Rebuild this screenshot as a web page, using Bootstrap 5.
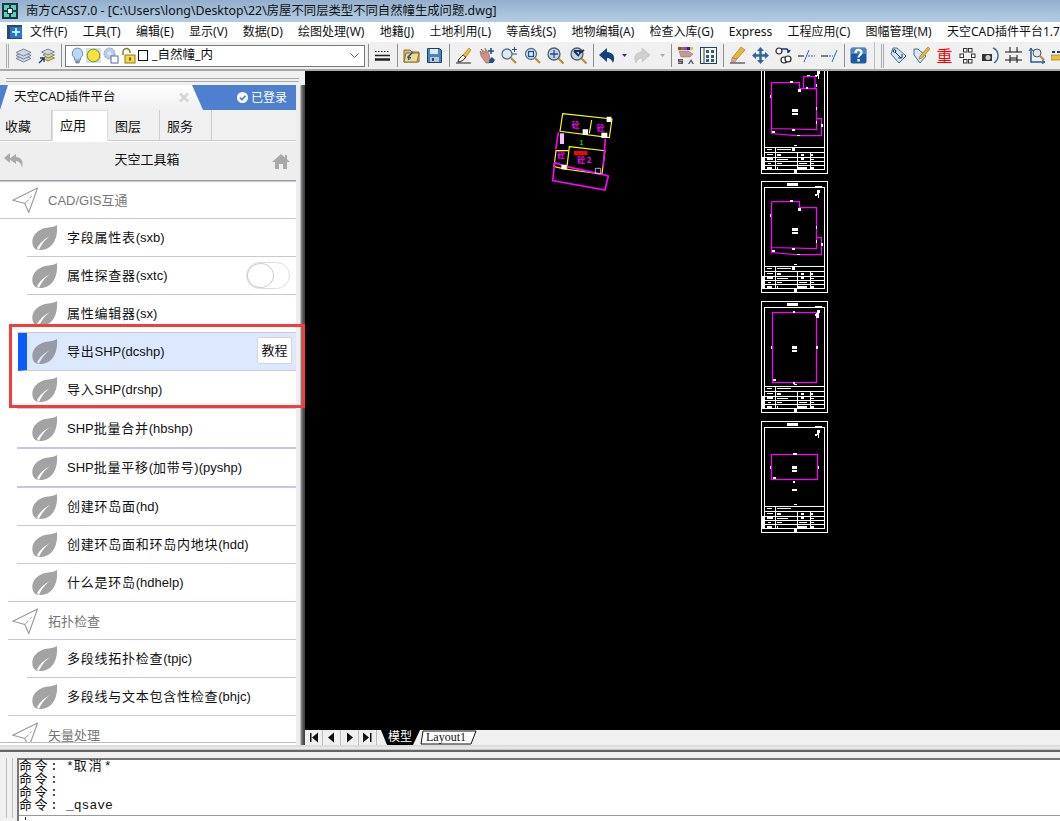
<!DOCTYPE html>
<html lang="zh-CN">
<head>
  <meta charset="UTF-8">
  <meta name="viewport" content="width=device-width, initial-scale=1.0">
  <title>南方CASS7.0</title>
  <link href="https://cdn.jsdelivr.net/npm/bootstrap@5.3.0/dist/css/bootstrap.min.css" rel="stylesheet">
  <style>
    html, body { height: 821px; overflow: hidden; }
    body { font-family: "Liberation Sans", "Noto Sans CJK SC", sans-serif; font-size: 13px; color: #111; background: #f0f0f0; position: relative; }
    svg { display: block; flex: none; }

    .win-title { height: 22px; padding-left: 2px; gap: 8px; background: linear-gradient(#94afcd, #b3cde5); font-family: "Noto Sans", "Noto Sans CJK SC", sans-serif; font-size: 12.35px; white-space: nowrap; }
    .menu-bar { height: 20px; background: #fff; padding-left: 7px; font-family: "Noto Sans", "Noto Sans CJK SC", sans-serif; font-size: 12px; white-space: nowrap; overflow: hidden; }
    .menu-bar .app-ico { margin-right: 7px; }
    .menu-bar span { margin-right: 15.3px; flex: none; }

    .tool-bar { height: 29px; background: #f0f0f0; border-bottom: 2px solid #a9a9a9; padding: 0 0 0 6px; gap: 6px; overflow: hidden; }
    .tool-bar > * { flex: none; }
    .grip { width: 3px; height: 24px; border-left: 1px solid #aaa; border-right: 1px solid #aaa; }
    .tb-sep { width: 1px; height: 23px; background: #8e8e8e; margin-right: -1px; }
    .combo { width: 300px; height: 22px; margin-left: -2px; margin-right: -3px; background: #fff; border: 1px solid #7a7a7a; padding-left: 5px; gap: 2px; }
    .combo-text { margin-left: 2px; font-family: "Noto Sans", "Noto Sans CJK SC", sans-serif; font-size: 12.5px; }
    .combo-arrow { margin-left: auto; margin-right: 5px; }
    .tb-end { width: 1px; height: 29px; background: #bbb; margin-left: 1px; }
    .tb-drop { width: 5px; }
    .red-char { width: 17px; height: 17px; color: #f00; font-size: 16px; line-height: 17px; text-align: center; font-family: "Noto Sans CJK SC", sans-serif; }

    .work { height: 674px; }
    .side { width: 305px; flex: none; position: relative; background: linear-gradient(90deg, #fff 296px, #eee 296px, #eee 300px, #8a8a8a 301px, #444 304px); overflow: hidden; }
    .side-in { width: 296px; height: 658px; overflow: hidden; background: #fff; border-bottom: 1px solid #bbb; }
    .side-top { height: 14px; background: #f0f0f0; padding: 7px 6px 0; }
    .side-top div { height: 4px; border-top: 1px solid #aaa; border-bottom: 1px solid #aaa; }

    .plug-head { height: 25px; background: #4f7fcf; color: #fff; }
    .plug-tab { width: 203px; height: 25px; padding: 0 13px 0 14px; background: linear-gradient(#fff, #f0f0f0); color: #111; font-size: 12.5px; clip-path: polygon(0 100%, 8px 0, 192px 0, 203px 100%); }
    .plug-user { margin-left: auto; margin-right: 9px; font-size: 12px; gap: 3px; }

    .tab-row { height: 31px; background: #f0f0f0; border-bottom: 1px solid #ccc; }
    .tab-row div { height: 30px; font-size: 13px; line-height: 34px; border-right: 1px solid #ccc; width: 52px; padding-left: 7px; }
    .tab-row .tab-first { padding-left: 5px; }
    .tab-row .tab-on { width: 56px; height: 31px; background: #fff; line-height: 29px; border: 1px solid #ddd; border-bottom: 0; }

    .nav-row { height: 39px; margin-top: 1px; background: #eee; border-bottom: 1px solid #9a9aae; box-shadow: 0 1px 1px #ccc; padding: 0 6px 0 4px; }
    .nav-name { flex: 1; text-align: center; margin-left: -2px; padding-bottom: 2px; }

    .grp-row { height: 38px; border-bottom: 1px solid #c8c6e6; padding-left: 12px; color: #777; }
    .grp-row svg { margin-right: 10px; }
    .grp-row span { padding-top: 2px; }
    .grp-last { margin-left: 8px; padding-left: 4px; }
    .tool-row { height: 38px; margin-left: 27px; padding-left: 4px; border-bottom: 1px solid #c8c6e6; position: relative; }
    .tool-row svg { margin-right: 9px; }
    .tool-row > span { padding-top: 1px; }
    .tool-wide { margin-left: 17px; padding-left: 14px; }
    .tool-wider { margin-left: 8px; padding-left: 23px; }
    .tool-thick { border-bottom-width: 2px; height: 39px; }
    .tool-tall { height: 40px; }
    .tool-on { margin-left: 18px; padding-left: 4px; border-left: 9px solid #0a5cff; background: #dce8fb; }
    .zh { letter-spacing: 0.75px; }
    .mini-switch { margin-left: auto; margin-right: 6px; width: 44px; height: 27px; border: 1px solid #ddd; border-radius: 14px; background: #fff; }
    .mini-switch div { width: 27px; height: 25px; border: 1px solid #ccc; border-radius: 50%; background: #fff; }
    .help-btn { margin: 0 4px 2px auto; width: 35px; height: 27px; padding: 0; font-size: 13px; line-height: 25px; color: #111; background: #fff; border: 1px solid #d5d5d5; border-radius: 2px; }

    .red-box { position: absolute; left: 9px; top: 253px; width: 296px; height: 84px; border: 3px solid #f33d3d; pointer-events: none; }

    .canvas-col { flex: 1; min-width: 0; }
    .cad-view { height: 659px; background: #000; }
    .sheet-tabs { height: 15px; background: #f0f0f0; }
    .nav-btn { width: 18px; height: 15px; border-right: 1px solid #bbb; }
    .sheet-on { position: relative; width: 39px; height: 15px; margin-left: 4px; padding-left: 7px; color: #fff; font-size: 12px; line-height: 15px; white-space: nowrap; }
    .sheet-on::before { content: ""; position: absolute; inset: 0; background: #000; clip-path: polygon(0 0, 39px 0, 32px 100%, 6px 100%); }
    .sheet-on span { position: relative; }
    .split-bar { height: 7px; background: linear-gradient(#d8d8d8, #ededed 60%, #666 75%, #666); }

    .cmd { height: 69px; padding: 6px 0 0 6px; background: #f0f0f0; }
    .cmd-grip { width: 7px; height: 60px; border-left: 1px solid #bbb; border-right: 1px solid #bbb; margin-right: 4px; }
    .cmd-box { flex: 1; background: #fff; border: 1px solid #777; border-width: 2px 0 0 2px; font-family: "Liberation Mono", "Noto Sans CJK SC", monospace; font-size: 13px; }
    .cmd-lines { height: 56px; border-bottom: 1px solid #999; }
    .cmd-lines div { height: 13px; line-height: 13px; white-space: pre; }
    .cmd-who { display: inline-block; width: 47px; letter-spacing: 2.5px; }
    .cmd-zh { letter-spacing: 2px; }
    .cmd-tick { width: 1px; height: 3px; background: #222; margin: 1px 0 0 6px; }
  </style>
</head>
<body>
  <!-- title bar -->
  <div class="win-title d-flex align-items-center">
    <svg width="16" height="16" viewBox="0 0 16 16"><rect width="16" height="16" fill="#1c3a3a"/><path d="M2 2h5v3H5v2H2zM9 2h5v5h-3V5H9zM2 9h3v2h2v3H2zM11 9h3v5H9v-3h2z" fill="#5ad0c0"/><path d="M6 6h4v4H6z" fill="#e8f4f0"/></svg>
    <span>南方CASS7.0 - [C:\Users\long\Desktop\22\房屋不同层类型不同自然幢生成问题.dwg]</span>
  </div>

  <!-- menu -->
  <div class="menu-bar d-flex align-items-center">
    <svg class="app-ico" width="16" height="15" viewBox="0 0 16 15"><rect x="0" y="0" width="15" height="14" fill="#33475f"/><rect x="3" y="2" width="12" height="11" fill="#1e78d8"/><path d="M5 7h8M9 3v8" stroke="#fff" stroke-width="1.500"/></svg>
    <span>文件(F)</span><span>工具(T)</span><span>编辑(E)</span><span>显示(V)</span><span>数据(D)</span><span>绘图处理(W)</span><span>地籍(J)</span><span>土地利用(L)</span><span>等高线(S)</span><span>地物编辑(A)</span><span>检查入库(G)</span><span>Express</span><span>工程应用(C)</span><span>图幅管理(M)</span><span>天空CAD插件平台1.7</span>
  </div>

  <!-- toolbar -->
  <div class="tool-bar d-flex align-items-center">
    <div class="grip"></div>
    <svg width="17" height="17" viewBox="0 0 17 17"><g fill="#ccd8e6" stroke="#76869a"><path d="M8.500 8 16 11.500 8.500 15 1 11.500z"/><path d="M8.500 5 16 8.500 8.500 12 1 8.500z"/><path d="M8.500 2 16 5.500 8.500 9 1 5.500z"/></g></svg>
    <svg width="17" height="17" viewBox="0 0 17 17"><g stroke="#76869a"><path d="M10 8 16.500 11 10 14 5 11.500z" fill="#f1c93c"/><path d="M10 5 16.500 8 10 11 5 8z" fill="#e8d27a"/><path d="M10 2 16.500 5 10 8 3.500 5z" fill="#ccd8e6"/></g><path d="M1 16 6 11M2 11h4v4" stroke="#123a7a" stroke-width="1.300" fill="none"/></svg>
    <div class="tb-sep"></div>
    <div class="combo d-flex align-items-center">
      <svg width="13" height="17" viewBox="0 0 13 17"><path d="M6.500 1a5.500 5.500 0 0 1 3 10v2h-6v-2a5.500 5.500 0 0 1 3-10z" fill="#bcd8f2" stroke="#6b8fb5"/><path d="M4 13.500h5v1.500l-1 1.500H5L4 15z" fill="#7d8fa5"/></svg>
      <svg width="15" height="17" viewBox="0 0 15 17"><rect x="0" y="1" width="15" height="15" fill="#cfe0f2"/><circle cx="7.500" cy="8.500" r="6.300" fill="#f7e33a" stroke="#7a8a30"/></svg>
      <svg width="16" height="17" viewBox="0 0 16 17"><circle cx="6.500" cy="6.500" r="5.500" fill="#b8cde8" stroke="#7f9cc4" stroke-dasharray="2 1"/><circle cx="6.500" cy="6.500" r="2" fill="#dfe9f6"/><rect x="8" y="9" width="7" height="7" fill="#fff" stroke="#4d6f9f"/></svg>
      <svg width="15" height="17" viewBox="0 0 15 17"><path d="M2 8V5a3.500 3.500 0 0 1 7 0v1" fill="none" stroke="#8a7a20" stroke-width="1.500"/><rect x="4" y="8" width="10" height="8" fill="#f5dc3c" stroke="#8a7a20"/><rect x="8" y="10.500" width="2" height="3" fill="#6a5a10"/></svg>
      <svg width="10" height="11" viewBox="0 0 10 11"><rect x=".5" y=".5" width="9" height="10" fill="#fff" stroke="#111"/></svg>
      <span class="combo-text">_自然幢_内</span>
      <svg class="combo-arrow" width="9" height="6" viewBox="0 0 9 6"><path d="M.5.500 4.500 4.500 8.500.5" fill="none" stroke="#555"/></svg>
    </div>
    <div class="tb-sep"></div>
    <svg width="17" height="17" viewBox="0 0 17 17"><path d="M1 4.500h1.500M4 4.500h1.500M7 4.500h1.500M10 4.500h1.500M13 4.500h1.500" stroke="#222"/><path d="M1 8.500h15" stroke="#222" stroke-width="1.500"/><path d="M1 12.500h15" stroke="#222" stroke-width="2.500"/></svg>
    <div class="tb-sep"></div>
    <svg width="17" height="17" viewBox="0 0 17 17"><path d="M1 3h6l2 2h7v10H1z" fill="#d8bd74" stroke="#8a6f30"/><path d="M3 6h13l-2 9H1z" fill="#efd98e" stroke="#8a6f30"/><path d="M10 5 5 10l1 3M5 10l3 1" stroke="#1c5a9a" stroke-width="1.500" fill="none"/></svg>
    <svg width="17" height="17" viewBox="0 0 17 17"><path d="M1.500 1.500h12l2 2v12h-14z" fill="#4b83c0" stroke="#1f3f70"/><rect x="4" y="2" width="8" height="5" fill="#dfe9f5"/><rect x="4" y="10" width="9" height="5" fill="#b8c8da"/><rect x="6" y="11" width="2" height="3" fill="#26456f"/></svg>
    <div class="tb-sep"></div>
    <svg width="17" height="17" viewBox="0 0 17 17"><path d="M1 16h15" stroke="#222"/><path d="M3 15C3 12 6 10 8 8l3 2c-2 3-5 5-8 5z" fill="none" stroke="#222"/><path d="m8 8 6-7 2 2-5 7z" fill="#f0b93a" stroke="#a06a10" stroke-width=".6"/></svg>
    <svg width="17" height="17" viewBox="0 0 17 17"><path d="M2 4l4 3-3-5 5 4-1-5 4 6 1 5-1 4H8L3 9z" fill="#cf9186" stroke="#96685f" stroke-width=".7"/><path d="M11.500 12.500 14 10l3 3-2 3h-4z" fill="#16509a"/><path d="M13 1v6M10 4h6" stroke="#16509a" stroke-width="1.600"/></svg>
    <svg width="17" height="17" viewBox="0 0 17 17"><circle cx="6" cy="7" r="5" fill="#dbeaf7" stroke="#5f6f80" stroke-width="1.300"/><path d="m10 11 5 5" stroke="#c28a30" stroke-width="2.200"/><path d="M13.500 0v5M11 2.500h5M11 7h5" stroke="#16509a"/></svg>
    <svg width="17" height="17" viewBox="0 0 17 17"><circle cx="7" cy="7" r="5.500" fill="#dbeaf7" stroke="#5f6f80" stroke-width="1.300"/><path d="m11 11 5 5" stroke="#c28a30" stroke-width="2.200"/><rect x="4.500" y="4.500" width="5" height="5" fill="none" stroke="#16509a" stroke-width="1.300"/></svg>
    <svg width="17" height="17" viewBox="0 0 17 17"><circle cx="7" cy="7" r="6" fill="#c6d4e2" stroke="#4f5f70" stroke-width="1.300"/><path d="m11.500 11.500 5 5" stroke="#c28a30" stroke-width="2.200"/><path d="M7 3v8M3 7h8" stroke="#16509a" stroke-width="1.300"/></svg>
    <svg width="17" height="17" viewBox="0 0 17 17"><circle cx="7" cy="7" r="6" fill="#c6d4e2" stroke="#4f5f70" stroke-width="1.300"/><path d="m11.500 11.500 5 5" stroke="#c28a30" stroke-width="2.200"/><path d="M4 4h6v2l4-3M4 4l5 5" stroke="#16345f" stroke-width="2" fill="none"/></svg>
    <div class="tb-sep"></div>
    <svg width="17" height="17" viewBox="0 0 17 17"><path d="M0 8 8 1v4c6 0 9 5 6 11-1-3-3-5-6-5v4z" fill="#14417e"/></svg>
    <svg class="tb-drop" width="5" height="17" viewBox="0 0 5 17"><path d="M0 7h5L2.500 10z" fill="#14417e"/></svg>
    <svg width="17" height="17" viewBox="0 0 17 17"><path d="M17 8 9 1v4C3 5 0 10 3 16c1-3 3-5 6-5v4z" fill="#cfcfcf" stroke="#b5b5b5" stroke-width=".5"/></svg>
    <svg class="tb-drop ms-1" width="5" height="17" viewBox="0 0 5 17"><path d="M0 7h5L2.500 10z" fill="#aaa"/></svg>
    <div class="tb-sep"></div>
    <svg width="17" height="17" viewBox="0 0 17 17"><path d="M1 0h3v3H1z" fill="#d22"/><path d="M4 0h3v3H4z" fill="#2a2"/><path d="M7 0h3v3H7z" fill="#c2c"/><path d="M10 0h3v3h-3z" fill="#22c"/><path d="M13 0h3v3h-3z" fill="#cc2"/><path d="M2 4h9l5 3-3 3H4z" fill="#c79a90" stroke="#8a6a60" stroke-width=".5"/><path d="M1 12h5v1.500H2.500v.5H6V17H1v-1.500h3.500V15H1zM11 17l3-5 3 5h-1.500L14 14.500 12.500 17z" fill="#556"/></svg>
    <svg width="17" height="17" viewBox="0 0 17 17"><rect x=".5" y=".5" width="16" height="16" fill="#fdf8d8" stroke="#1f3f70"/><path d="M4 1v15" stroke="#1f3f70"/><path d="M6 3h3v3H6zM11 3h3v3h-3zM6 8h3v3H6zM11 8h3v3h-3zM6 12h3v3H6zM11 12h3v3h-3z" fill="#2a5c96"/></svg>
    <div class="tb-sep"></div>
    <svg width="17" height="17" viewBox="0 0 17 17"><path d="M1 16h15" stroke="#222"/><path d="m12 0 4 3-8 9-5-1z" fill="#e8b53a" stroke="#96701a" stroke-width=".6"/><path d="m3 11 5 1-2 3H2z" fill="#e6a4a0" stroke="#a06a60" stroke-width=".5"/></svg>
    <svg width="17" height="17" viewBox="0 0 17 17"><path d="M8.500 0 12 4h-2.300v3.300H13V5l4 3.500L13 12V9.700H9.700V13H12l-3.500 4L5 13h2.300V9.700H4V12L0 8.500 4 5v2.300h3.300V4H5z" fill="#2a64a8"/></svg>
    <svg width="17" height="17" viewBox="0 0 17 17"><g fill="#fff" stroke="#222" stroke-width="1.200"><circle cx="4" cy="4" r="3"/><circle cx="9" cy="13" r="3"/><circle cx="13" cy="12" r="3"/></g><path d="M6 2h6l2 3M14 5l-2 0M14 5l1-2" fill="none" stroke="#123a7a" stroke-width="1.400"/></svg>
    <svg width="17" height="17" viewBox="0 0 17 17"><path d="M0 9h6" stroke="#111"/><path d="M6 15 11 3" stroke="#1a6ad0"/><path d="M10 9h7" stroke="#1a6ad0" stroke-dasharray="2 1"/></svg>
    <svg width="17" height="17" viewBox="0 0 17 17"><path d="M0 9h7" stroke="#111"/><path d="M8 9h4" stroke="#1a6ad0" stroke-dasharray="2 1"/><path d="M11 15 16 3" stroke="#1a6ad0"/></svg>
    <div class="tb-sep"></div>
    <svg width="17" height="17" viewBox="0 0 17 17"><rect width="16" height="16" x=".5" y=".5" rx="2" fill="#1f5a9f"/><rect x="1" y="1" width="15" height="6" fill="#4d86c4"/><path d="M5.500 6c0-4 6-4 6-.5 0 2.500-3 2.500-3 5" fill="none" stroke="#fff" stroke-width="2.200"/><rect x="7.400" y="12" width="2.300" height="2.500" fill="#fff"/></svg>
    <div class="tb-end"></div>
    <div class="grip"></div>
    <svg width="17" height="17" viewBox="0 0 17 17"><path d="M3 1h4l9 8-7 7-8-9z" fill="#d6e6f5" stroke="#3f6f9f"/><circle cx="4.500" cy="4" r="1.300" fill="#fff" stroke="#223"/><path d="M5 5 11 11M8 11h4V7" stroke="#123a7a" fill="none"/></svg>
    <svg width="17" height="17" viewBox="0 0 17 17"><path d="M1 2h4l8 7-6 7-6-8z" fill="#d6e6f5" stroke="#3f6f9f"/><path d="M15 0l2 2-8 9-3 1 1-3z" fill="#e8b53a" stroke="#96701a" stroke-width=".6"/></svg>
    <span class="red-char">重</span>
    <svg width="17" height="17" viewBox="0 0 17 17"><g fill="#fff" stroke="#333"><rect x="4.500" y="1.500" width="3.500" height="3.500"/><rect x="9.500" y="1.500" width="3.500" height="3.500"/><rect x="1" y="7" width="3.500" height="3.500"/><rect x="12.500" y="7" width="3.500" height="3.500"/><rect x="4.500" y="12.500" width="3.500" height="3.500"/><rect x="9.500" y="12.500" width="3.500" height="3.500"/></g></svg>
    <svg width="17" height="17" viewBox="0 0 17 17"><path d="M0 7h10v7H0z" fill="#333"/><circle cx="6" cy="10.500" r="2.500" fill="#ccc"/><path d="M11 1c6 2 7 11 1 15" fill="none" stroke="#3f6f9f" stroke-width="1.500"/></svg>
    <svg width="17" height="17" viewBox="0 0 17 17"><path d="M0 5h17M0 13h17" stroke="#111"/><path d="M5 0v5M12 0v5M5 8v8M12 8v8M5 11h7" stroke="#111"/></svg>
    <svg width="17" height="17" viewBox="0 0 17 17"><path d="M3 1v14h14" fill="none" stroke="#1a5aa8" stroke-width="1.500"/><path d="m1 4 2-3 2 3M14 13l3 2-3 2" fill="none" stroke="#1a5aa8"/><circle cx="9" cy="6" r="4" fill="#dbeaf7" stroke="#555"/><path d="m12 9 4 4" stroke="#c28a30" stroke-width="2"/></svg>
    <svg width="17" height="17" viewBox="0 0 17 17"><path d="M0 8h17v5H0z" fill="#e8c03a" stroke="#8a6f20" stroke-width=".6"/><path d="M1 4h3v2H1zM6 4h3v2H6zM11 4h3v2h-3z" fill="#123a7a"/></svg>
  </div>

  <div class="work d-flex">
    <!-- left panel -->
    <div class="side">
      <div class="side-top"><div></div></div>
      <div class="side-in">
        <div class="plug-head d-flex align-items-center">
          <div class="plug-tab d-flex align-items-center justify-content-between">
            <span>天空CAD插件平台</span>
            <svg width="12" height="11" viewBox="0 0 12 11"><path d="M2 1.500 10 9.500M10 1.500 2 9.500" stroke="#d6d6d6" stroke-width="2.500"/></svg>
          </div>
          <div class="plug-user d-flex align-items-center">
            <svg width="11" height="11" viewBox="0 0 11 11"><circle cx="5.500" cy="5.500" r="5.500" fill="#fff"/><path d="M2.800 5.500 5 7.700 8.400 3.800" fill="none" stroke="#4f7fcf" stroke-width="1.700"/></svg>
            <span>已登录</span>
          </div>
        </div>
        <div class="tab-row d-flex">
          <div class="tab-first">收藏</div><div class="tab-on">应用</div><div>图层</div><div>服务</div>
        </div>
        <div class="nav-row d-flex align-items-center">
          <svg width="20" height="16" viewBox="0 0 20 16"><path d="M6 0 0 5l6 5V7zM12 1 5 6l7 5V8c3 0 5 2 6 7 2-7-1-11-6-11z" fill="#a9a9a9"/></svg>
          <div class="nav-name">天空工具箱</div>
          <svg width="18" height="15" viewBox="0 0 18 15"><path d="M9 0 0 8h3v7h4v-5h4v5h4V8h3l-3-2.700V1h-2v2.500z" fill="#a9a9a9"/></svg>
        </div>

        <div class="grp-row d-flex align-items-center">
          <svg width="26" height="26" viewBox="0 0 26 26"><path d="M25.500 1 .8 13.200l12 3.300 4 9z" fill="none" stroke="#999" stroke-width="1.100"/><path d="m12.800 16.500 4-4M18 11l1.500-1.500" stroke="#999"/></svg>
          <span>CAD/GIS互通</span>
        </div>
        <div class="tool-row d-flex align-items-center"><svg width="27" height="27" viewBox="0 0 27 27"><path d="M26 1C27 14 22 26 9 26 6 26 3.500 25 2 22-1 13 6 6 14 4 19 3 23 3 26 1z" fill="#a3a3a3"/><path d="M8 26C10 21 13 17 19 12 13 15 9 19 6 24z" fill="#fff"/></svg><span><span class="zh">字段属性表</span>(sxb)</span></div>
        <div class="tool-row d-flex align-items-center"><svg width="27" height="27" viewBox="0 0 27 27"><path d="M26 1C27 14 22 26 9 26 6 26 3.500 25 2 22-1 13 6 6 14 4 19 3 23 3 26 1z" fill="#a3a3a3"/><path d="M8 26C10 21 13 17 19 12 13 15 9 19 6 24z" fill="#fff"/></svg><span><span class="zh">属性探查器</span>(sxtc)</span><div class="mini-switch"><div></div></div></div>
        <div class="tool-row tool-wide d-flex align-items-center"><svg width="27" height="27" viewBox="0 0 27 27"><path d="M26 1C27 14 22 26 9 26 6 26 3.500 25 2 22-1 13 6 6 14 4 19 3 23 3 26 1z" fill="#a3a3a3"/><path d="M8 26C10 21 13 17 19 12 13 15 9 19 6 24z" fill="#fff"/></svg><span><span class="zh">属性编辑器</span>(sx)</span></div>
        <div class="tool-row tool-on d-flex align-items-center"><svg width="27" height="27" viewBox="0 0 27 27"><path d="M26 1C27 14 22 26 9 26 6 26 3.500 25 2 22-1 13 6 6 14 4 19 3 23 3 26 1z" fill="#969ba5"/><path d="M8 26C10 21 13 17 19 12 13 15 9 19 6 24z" fill="#dce8fb"/></svg><span><span class="zh">导出</span>SHP(dcshp)</span><button type="button" class="btn help-btn">教程</button></div>
        <div class="tool-row tool-wide d-flex align-items-center"><svg width="27" height="27" viewBox="0 0 27 27"><path d="M26 1C27 14 22 26 9 26 6 26 3.500 25 2 22-1 13 6 6 14 4 19 3 23 3 26 1z" fill="#a3a3a3"/><path d="M8 26C10 21 13 17 19 12 13 15 9 19 6 24z" fill="#fff"/></svg><span><span class="zh">导入</span>SHP(drshp)</span></div>
        <div class="tool-row tool-wide tool-thick tool-tall d-flex align-items-center"><svg width="27" height="27" viewBox="0 0 27 27"><path d="M26 1C27 14 22 26 9 26 6 26 3.500 25 2 22-1 13 6 6 14 4 19 3 23 3 26 1z" fill="#a3a3a3"/><path d="M8 26C10 21 13 17 19 12 13 15 9 19 6 24z" fill="#fff"/></svg><span>SHP<span class="zh">批量合并</span>(hbshp)</span></div>
        <div class="tool-row tool-wide tool-thick d-flex align-items-center"><svg width="27" height="27" viewBox="0 0 27 27"><path d="M26 1C27 14 22 26 9 26 6 26 3.500 25 2 22-1 13 6 6 14 4 19 3 23 3 26 1z" fill="#a3a3a3"/><path d="M8 26C10 21 13 17 19 12 13 15 9 19 6 24z" fill="#fff"/></svg><span>SHP<span class="zh">批量平移</span>(<span class="zh">加带号</span>)(pyshp)</span></div>
        <div class="tool-row tool-wide d-flex align-items-center"><svg width="27" height="27" viewBox="0 0 27 27"><path d="M26 1C27 14 22 26 9 26 6 26 3.500 25 2 22-1 13 6 6 14 4 19 3 23 3 26 1z" fill="#a3a3a3"/><path d="M8 26C10 21 13 17 19 12 13 15 9 19 6 24z" fill="#fff"/></svg><span><span class="zh">创建环岛面</span>(hd)</span></div>
        <div class="tool-row tool-wide d-flex align-items-center"><svg width="27" height="27" viewBox="0 0 27 27"><path d="M26 1C27 14 22 26 9 26 6 26 3.500 25 2 22-1 13 6 6 14 4 19 3 23 3 26 1z" fill="#a3a3a3"/><path d="M8 26C10 21 13 17 19 12 13 15 9 19 6 24z" fill="#fff"/></svg><span><span class="zh">创建环岛面和环岛内地块</span>(hdd)</span></div>
        <div class="tool-row tool-wider d-flex align-items-center"><svg width="27" height="27" viewBox="0 0 27 27"><path d="M26 1C27 14 22 26 9 26 6 26 3.500 25 2 22-1 13 6 6 14 4 19 3 23 3 26 1z" fill="#a3a3a3"/><path d="M8 26C10 21 13 17 19 12 13 15 9 19 6 24z" fill="#fff"/></svg><span><span class="zh">什么是环岛</span>(hdhelp)</span></div>

        <div class="grp-row grp-last d-flex align-items-center">
          <svg width="26" height="26" viewBox="0 0 26 26"><path d="M25.500 1 .8 13.200l12 3.300 4 9z" fill="none" stroke="#999" stroke-width="1.100"/><path d="m12.800 16.500 4-4M18 11l1.500-1.500" stroke="#999"/></svg>
          <span>拓扑检查</span>
        </div>
        <div class="tool-row d-flex align-items-center"><svg width="27" height="27" viewBox="0 0 27 27"><path d="M26 1C27 14 22 26 9 26 6 26 3.500 25 2 22-1 13 6 6 14 4 19 3 23 3 26 1z" fill="#a3a3a3"/><path d="M8 26C10 21 13 17 19 12 13 15 9 19 6 24z" fill="#fff"/></svg><span><span class="zh">多段线拓扑检查</span>(tpjc)</span></div>
        <div class="tool-row tool-wider d-flex align-items-center"><svg width="27" height="27" viewBox="0 0 27 27"><path d="M26 1C27 14 22 26 9 26 6 26 3.500 25 2 22-1 13 6 6 14 4 19 3 23 3 26 1z" fill="#a3a3a3"/><path d="M8 26C10 21 13 17 19 12 13 15 9 19 6 24z" fill="#fff"/></svg><span><span class="zh">多段线与文本包含性检查</span>(bhjc)</span></div>
        <div class="grp-row grp-last d-flex align-items-center">
          <svg width="26" height="26" viewBox="0 0 26 26"><path d="M25.500 1 .8 13.200l12 3.300 4 9z" fill="none" stroke="#999" stroke-width="1.100"/><path d="m12.800 16.500 4-4M18 11l1.500-1.500" stroke="#999"/></svg>
          <span>矢量处理</span>
        </div>
      </div>
      <div class="red-box"></div>
    </div>

    <!-- drawing area -->
    <div class="canvas-col">
      <div class="cad-view">
        <svg width="755" height="659" viewBox="305 71 755 659" shape-rendering="crispEdges">
          <defs>
            <g id="frame">
              <rect x=".5" y=".5" width="65.500" height="110.500" fill="none" stroke="#fff"/>
              <rect x="3.500" y="6.500" width="60" height="101" fill="none" stroke="#fff"/>
              <rect x="26" y="1.500" width="11" height="3" fill="#fff"/>
              <rect x="54" y="5" width="7" height="1" fill="#fff"/>
              <rect x="0" y="95" width="3" height="13" fill="#fff"/>
              <path d="M3.500 85.500h60M3.500 90.500h60M3.500 95.500h60M3.500 99.500h60M3.500 103.500h60M14.500 85.500v22M36.500 90.500v17M49.500 90.500v17" fill="none" stroke="#fff"/>
              <path d="M6 87h5v1H6zM16 87h14v1H16zM6 92h6v1H6zM16 92h4v2h-4zM40 92h3v2h-3zM50 92h2v2h-2zM6 96h6v2H6zM16 97h11v1H16zM40 96h3v2h-3zM50 97h3v1h-3zM7 101h3v1H7zM16 101h5v1h-5zM38 101h8v1h-8zM50 101h3v1h-3zM6 105h5v2H6zM16 105h1v2h-1zM37 105h9v2h-9zM50 105h3v2h-3zM33 108h3v3h-3zM33 83h3v1h-3z" fill="#fff"/>
              <path d="M56 9h3v3h-1v5h-1v-3h-1v1h-2v-2h2z" fill="#fff"/>
            </g>
            <g id="plan-a">
              <path shape-rendering="auto" d="M10.500 20.500H38.500V26.500H55.500V67.500L10.500 66.500M55.500 56.500H60.500V73.500H35.500L10.500 71.500V20.500" fill="none" stroke="#f0f" stroke-width="1.250"/>
              <path d="M29 19h3v2h-3zM37 27h3v3h-3zM9 33h1v3H9zM55 45h1v3h-1zM55 59h1v3h-1zM60 62h2v3h-2zM31 67h3v2h-3zM11 69h3v2h-3zM36 73h3v1h-3zM31 47h6v3h-6zM31 51h6v2h-6zM31 86h3v3h-3z" fill="#fff"/>
            </g>
          </defs>

          <!-- small building near the top -->
          <g transform="translate(540 100) scale(.3333)" shape-rendering="auto">
            <g fill="none" stroke="#ff0" stroke-width="3.500">
              <path d="M68 41 216 57 208 113 60 94Z"/>
              <path d="M155 60 148 100"/>
              <path d="M88 140 195 152 186 222 80 208Z"/>
              <path d="M85 152H48L42 200 78 208"/>
            </g>
            <g fill="none" stroke="#f0f" stroke-width="5">
              <path d="M55 97 47 148"/>
              <path d="M196 116 190 200"/>
              <path d="M44 188 80 200 190 224 205 228 195 270 38 242Z"/>
            </g>
            <rect x="102" y="153" width="40" height="12" fill="#f00"/>
            <path d="M128 88h16v16h-16zM184 98h18v16h-18zM64 194h16v14H64zM200 50h14v16h-14z" fill="#fff"/>
            <path d="M60 100h12v32H60z" fill="#f8c0f8"/>
            <path d="M166 205h16v16h-16z" fill="none" stroke="#fff" stroke-width="2"/>
            <g fill="#f0f" font-family="'Noto Sans CJK SC',sans-serif" font-size="23" font-weight="700">
              <text x="95" y="84">砼</text>
              <text x="170" y="94">砼</text>
              <text x="52" y="175">砼</text>
              <text x="112" y="189">砼</text>
              <text x="140" y="189">2</text>
            </g>
            <text x="118" y="136" fill="#0f0" font-family="'Liberation Sans',sans-serif" font-size="24">1</text>
          </g>

          <!-- sheet 1 -->
          <use href="#frame" x="761" y="62"/>
          <use href="#plan-a" x="761" y="62"/>
          <rect shape-rendering="auto" x="803.500" y="76.500" width="11.500" height="12" fill="none" stroke="#f0f" stroke-width="1.250"/>
          <path d="M807 75h3v1h-3zM816 84h1v3h-1zM806 87h2v2h-2z" fill="#fff"/>
          <!-- sheet 2 -->
          <use href="#frame" x="761" y="181"/>
          <use href="#plan-a" x="761" y="181"/>
          <!-- sheet 3 -->
          <use href="#frame" x="761" y="301"/>
          <rect shape-rendering="auto" x="772.500" y="312.500" width="44" height="70" fill="none" stroke="#f0f" stroke-width="1.250"/>
          <path d="M793 311h2v2h-2zM771 346h1v3h-1zM816 346h2v3h-2zM793 382h2v2h-2zM773 379h3v2h-3zM792 346h5v3h-5zM792 350h5v2h-5zM817 310h2v3h-2zM816 313h2v5h-2z" fill="#fff"/>
          <!-- sheet 4 -->
          <use href="#frame" x="761" y="421"/>
          <rect shape-rendering="auto" x="771.500" y="454.500" width="46" height="25" fill="none" stroke="#f0f" stroke-width="1.250"/>
          <path d="M793 453h4v2h-4zM770 466h1v3h-1zM818 466h1v3h-1zM793 481h2v2h-2zM773 477h3v2h-3zM792 466h5v3h-5zM792 470h5v2h-5zM792 489h5v2h-5z" fill="#fff"/>
        </svg>
      </div>
      <div class="sheet-tabs d-flex align-items-center">
        <div class="nav-btn d-flex align-items-center justify-content-center"><svg width="9" height="11" viewBox="0 0 9 11"><path d="M1 1v9h1.500V1zM9 .5 3 5.500l6 5z" fill="#111"/></svg></div>
        <div class="nav-btn d-flex align-items-center justify-content-center"><svg width="7" height="11" viewBox="0 0 7 11"><path d="M6 .5 0 5.500l6 5z" fill="#111"/></svg></div>
        <div class="nav-btn d-flex align-items-center justify-content-center"><svg width="7" height="11" viewBox="0 0 7 11"><path d="m1 .5 6 5-6 5z" fill="#111"/></svg></div>
        <div class="nav-btn d-flex align-items-center justify-content-center"><svg width="9" height="11" viewBox="0 0 9 11"><path d="m0 .5 6 5-6 5zM7 1v9h1.500V1z" fill="#111"/></svg></div>
        <div class="sheet-on"><span>模型</span></div>
        <svg width="58" height="15" viewBox="0 0 58 15">
          <path d="M3 1 1 14H51L56 1z" fill="#fff" stroke="#111"/>
          <text x="6" y="11" fill="#111" font-family="'Liberation Serif',serif" font-size="12">Layout1</text>
        </svg>
      </div>
    </div>
  </div>
  <div class="split-bar"></div>

  <!-- command line -->
  <div class="cmd d-flex">
    <div class="cmd-grip"></div>
    <div class="cmd-box">
      <div class="cmd-lines">
        <div><span class="cmd-who">命令:</span>*<span class="cmd-zh">取消</span>*</div>
        <div><span class="cmd-who">命令:</span></div>
        <div><span class="cmd-who">命令:</span></div>
        <div><span class="cmd-who">命令:</span>_qsave</div>
      </div>
      <div class="cmd-tick"></div>
    </div>
  </div>

  <script src="https://cdn.jsdelivr.net/npm/bootstrap@5.3.0/dist/js/bootstrap.bundle.min.js"></script>
</body>
</html>
